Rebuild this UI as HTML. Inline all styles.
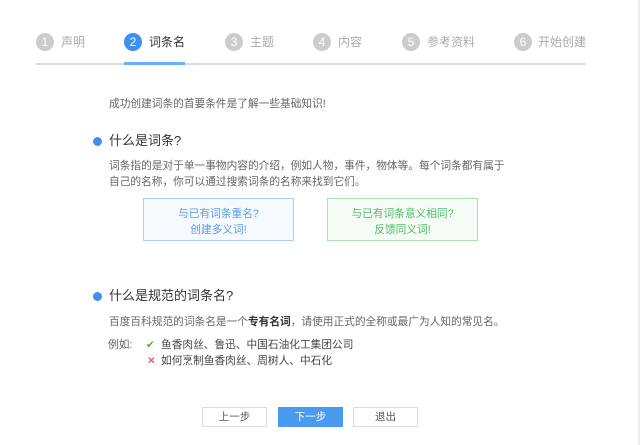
<!DOCTYPE html>
<html><head><meta charset="utf-8"><style>
*{margin:0;padding:0;box-sizing:border-box}
body{width:640px;height:445px;background:#fff;position:relative;overflow:hidden;font-family:"Liberation Sans","Noto Sans CJK SC",sans-serif;color:#666}
.a{position:absolute;white-space:nowrap}
.c{position:absolute;width:18px;height:18px;border-radius:50%;background:#ccc;color:#fff;font-size:12px;line-height:18px;text-align:center;top:33px}
.s{position:absolute;top:33px;font-size:12px;line-height:18px;color:#aaa;white-space:nowrap}
.dot{position:absolute;width:9px;height:9px;border-radius:50%;background:#3d8ff0;left:93px}
.h{font-size:13px;color:#333;line-height:18px}
.t{font-size:10.7px;line-height:16px;color:#666}
.box{position:absolute;top:198px;height:43px;width:151px;font-size:10.7px;text-align:center;line-height:16px;padding-top:7px}
.btn{position:absolute;top:407px;height:20px;width:65px;border:1px solid #ddd;font-size:10.5px;text-align:center;line-height:18px;color:#555;background:#fff}
</style></head><body>
<div style="position:absolute;right:0;top:0;width:2px;height:445px;background:#eee"></div>
<div class="c" style="left:36px">1</div><div class="s" style="left:61px">声明</div>
<div class="c" style="left:124px;background:#3d8ff0">2</div><div class="s" style="left:149px;color:#333">词条名</div>
<div class="c" style="left:225px">3</div><div class="s" style="left:250px">主题</div>
<div class="c" style="left:313px">4</div><div class="s" style="left:338px">内容</div>
<div class="c" style="left:402px">5</div><div class="s" style="left:427px">参考资料</div>
<div class="c" style="left:514px">6</div><div class="s" style="left:538px">开始创建</div>
<div style="position:absolute;left:36px;top:63px;width:549px;height:2px;background:#ddd"></div>
<div style="position:absolute;left:124px;top:62px;width:61px;height:3px;background:#6aaef5"></div>

<div class="a t" style="left:109px;top:96px">成功创建词条的首要条件是了解一些基础知识!</div>
<div class="dot" style="top:137px"></div>
<div class="a h" style="left:109px;top:132px">什么是词条?</div>
<div class="a t" style="left:109px;top:158px">词条指的是对于单一事物内容的介绍，例如人物，事件，物体等。每个词条都有属于</div>
<div class="a t" style="left:109px;top:174px">自己的名称，你可以通过搜索词条的名称来找到它们。</div>
<div class="box" style="left:143px;border:1px solid #a7cdf7;background:#f5faff;color:#5a9be6">与已有词条重名?<br>创建多义词!</div>
<div class="box" style="left:327px;border:1px solid #a9e0b4;background:#f4fcf5;color:#52b86a">与已有词条意义相同?<br>反馈同义词!</div>

<div class="dot" style="top:292px"></div>
<div class="a h" style="left:109px;top:287px">什么是规范的词条名?</div>
<div class="a t" style="left:109px;top:314px">百度百科规范的词条名是一个<b style="color:#333">专有名词</b>，请使用正式的全称或最广为人知的常见名。</div>
<div class="a t" style="left:108px;top:337px">例如:</div>
<div class="a t" style="left:146px;top:337px;color:#52b030">✔</div>
<div class="a t" style="left:161px;top:337px;color:#444">鱼香肉丝、鲁迅、中国石油化工集团公司</div>
<div class="a t" style="left:147px;top:353px;color:#e33">✕</div>
<div class="a t" style="left:161px;top:353px;color:#444">如何烹制鱼香肉丝、周树人、中石化</div>

<div class="btn" style="left:202px">上一步</div>
<div class="btn" style="left:278px;background:#4a9bf0;border-color:#4a9bf0;color:#fff">下一步</div>
<div class="btn" style="left:353px">退出</div>
</body></html>
